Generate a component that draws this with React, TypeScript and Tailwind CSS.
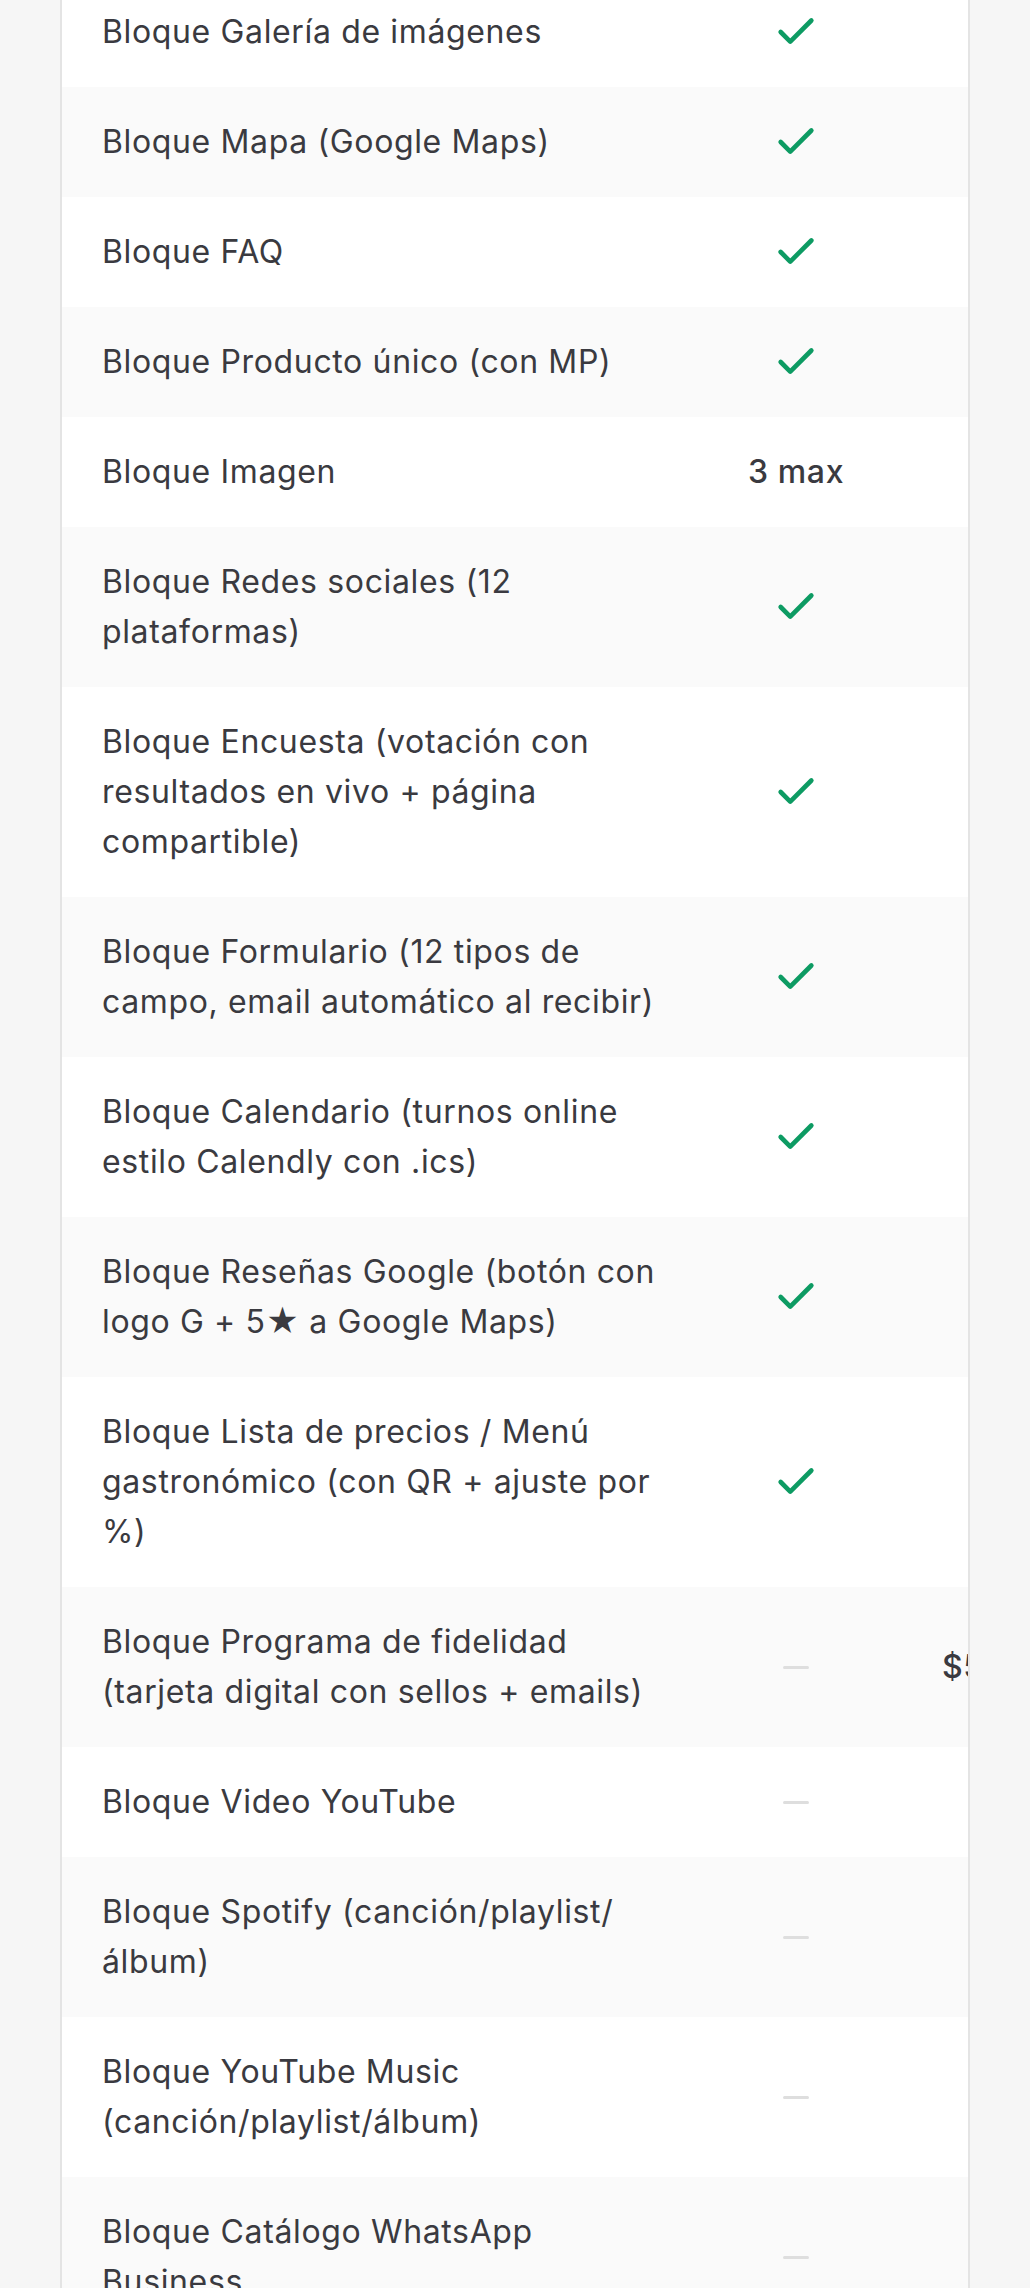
import { Check } from "lucide-react";

type Cell = "check" | "dash" | string;

interface FeatureRow {
  lines: string[];
  plan: Cell;
  addon?: string;
}

// the add-on column sits mostly past the card edge, only the price peeks in
const rows: FeatureRow[] = [
  { lines: ["Bloque Galería de imágenes"], plan: "check" },
  { lines: ["Bloque Mapa (Google Maps)"], plan: "check" },
  { lines: ["Bloque FAQ"], plan: "check" },
  { lines: ["Bloque Producto único (con MP)"], plan: "check" },
  { lines: ["Bloque Imagen"], plan: "3 max" },
  { lines: ["Bloque Redes sociales (12", "plataformas)"], plan: "check" },
  {
    lines: ["Bloque Encuesta (votación con", "resultados en vivo + página", "compartible)"],
    plan: "check",
  },
  { lines: ["Bloque Formulario (12 tipos de", "campo, email automático al recibir)"], plan: "check" },
  { lines: ["Bloque Calendario (turnos online", "estilo Calendly con .ics)"], plan: "check" },
  { lines: ["Bloque Reseñas Google (botón con", "logo G + 5★ a Google Maps)"], plan: "check" },
  {
    lines: ["Bloque Lista de precios / Menú", "gastronómico (con QR + ajuste por", "%)"],
    plan: "check",
  },
  {
    lines: ["Bloque Programa de fidelidad", "(tarjeta digital con sellos + emails)"],
    plan: "dash",
    addon: "$5.000",
  },
  { lines: ["Bloque Video YouTube"], plan: "dash" },
  { lines: ["Bloque Spotify (canción/playlist/", "álbum)"], plan: "dash" },
  { lines: ["Bloque YouTube Music", "(canción/playlist/álbum)"], plan: "dash" },
  { lines: ["Bloque Catálogo WhatsApp", "Business"], plan: "dash" },
];

function CellValue({ value }: { value: Cell }) {
  if (value === "check") {
    return <Check size={46} strokeWidth={2.4} className="text-[#0d9b63]" />;
  }
  if (value === "dash") {
    return <div className="w-[26px] h-[3px] rounded-full bg-[#dedede]" />;
  }
  return <span className="font-medium text-[#3a3a40]">{value}</span>;
}

export default function App() {
  return (
    <div
      className="h-[2288px] overflow-hidden bg-[#f6f6f6] px-[60px]"
      style={{ fontFamily: "Inter, Lato, sans-serif" }}
    >
      <div className="-mt-[23px] border-x-2 border-[#e4e4e4] bg-white overflow-hidden">
        {rows.map((row, i) => (
          <div
            key={i}
            className={`flex w-[1016px] text-[32px] leading-[50px] tracking-[0.02em] text-[#3a3a40] ${
              i % 2 === 0 ? "bg-white" : "bg-[#fafafa]"
            }`}
          >
            <div className="w-[640px] shrink-0 py-[30px] px-[40px]">
              {row.lines.map((line, j) => (
                <div key={j} className="whitespace-nowrap">
                  {line}
                </div>
              ))}
            </div>
            <div className="w-[188px] shrink-0 flex items-center justify-center">
              <CellValue value={row.plan} />
            </div>
            <div className="w-[188px] shrink-0 flex items-center pl-[52px]">
              {row.addon && <CellValue value={row.addon} />}
            </div>
          </div>
        ))}
      </div>
    </div>
  );
}
